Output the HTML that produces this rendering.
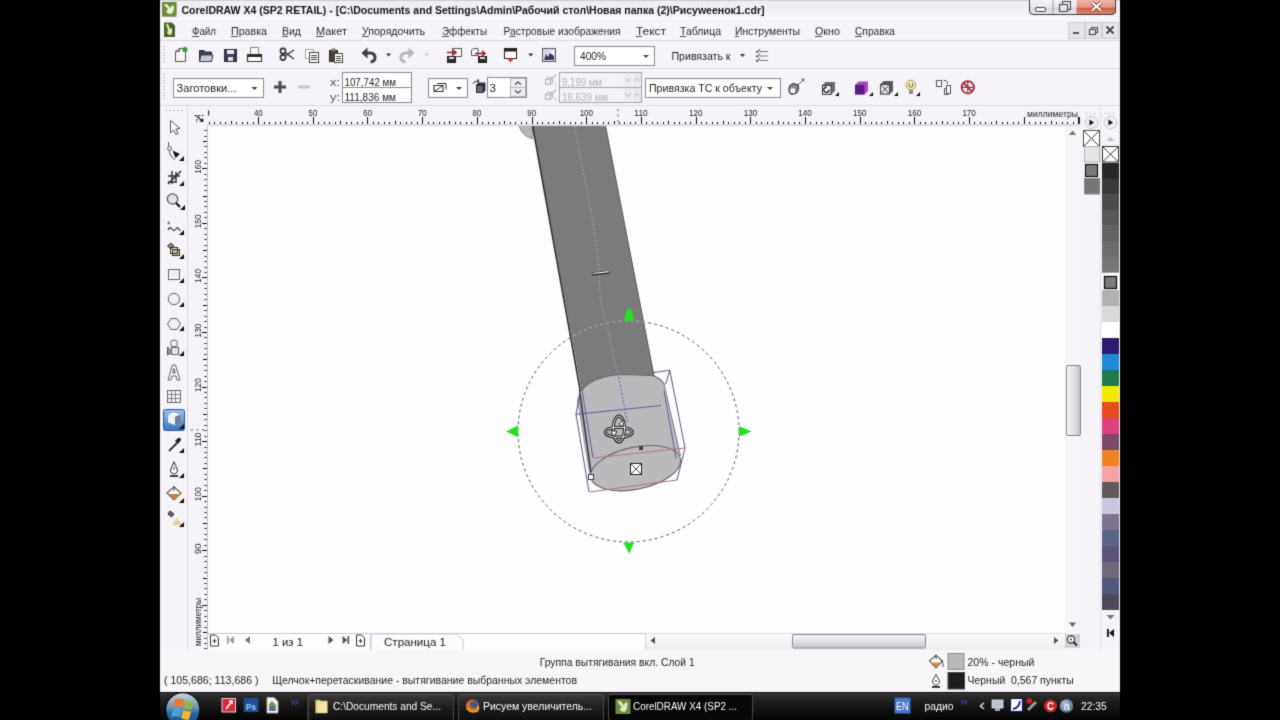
<!DOCTYPE html>
<html><head><meta charset="utf-8">
<style>
*{margin:0;padding:0}
html,body{width:1280px;height:720px;overflow:hidden;background:#000}
svg{position:absolute;left:0;top:0;font-family:"Liberation Sans",sans-serif}
</style></head><body>
<svg width="1280" height="720" viewBox="0 0 1280 720">
<defs>
<linearGradient id="gTitle" x1="0" y1="0" x2="0" y2="1"><stop offset="0" stop-color="#efedf3"/><stop offset="0.6" stop-color="#f3f1f6"/><stop offset="1" stop-color="#f9f7fb"/></linearGradient>
</defs>
<filter id="soft" x="0" y="0" width="1280" height="720" filterUnits="userSpaceOnUse" color-interpolation-filters="sRGB"><feConvolveMatrix order="3" kernelMatrix="0.019 0.100 0.019 0.100 0.524 0.100 0.019 0.100 0.019" edgeMode="duplicate"/></filter>
<g filter="url(#soft)">
<rect x="160" y="0" width="960" height="690" fill="#f6f3f9" />
<rect x="160" y="650" width="960" height="42" fill="#f9f6fa" />
<rect x="160" y="0" width="960" height="20" fill="url(#gTitle)" />
<rect x="160" y="0" width="960" height="1" fill="#cfcdd4" />
<text x="181.5" y="14" font-size="11" fill="#141414" font-weight="bold" textLength="583" lengthAdjust="spacingAndGlyphs" >CorelDRAW X4 (SP2 RETAIL) - [C:\Documents and Settings\Admin\Рабочий стол\Новая папка (2)\Рисуweeнок1.cdr]</text>
<rect x="160" y="40" width="960" height="1" fill="#dddae3" />
<rect x="160" y="68" width="960" height="1" fill="#dddae3" />
<rect x="160" y="105" width="960" height="1" fill="#dddae3" />
<text x="192" y="35" font-size="11.5" fill="#2a2a2a" textLength="24" lengthAdjust="spacingAndGlyphs" >Файл</text>
<rect x="192" y="36" width="7" height="1" fill="#555" />
<text x="231" y="35" font-size="11.5" fill="#2a2a2a" textLength="36" lengthAdjust="spacingAndGlyphs" >Правка</text>
<rect x="231" y="36" width="7" height="1" fill="#555" />
<text x="282" y="35" font-size="11.5" fill="#2a2a2a" textLength="19" lengthAdjust="spacingAndGlyphs" >Вид</text>
<rect x="282" y="36" width="6" height="1" fill="#555" />
<text x="316" y="35" font-size="11.5" fill="#2a2a2a" textLength="31" lengthAdjust="spacingAndGlyphs" >Макет</text>
<rect x="316" y="36" width="8" height="1" fill="#555" />
<text x="362" y="35" font-size="11.5" fill="#2a2a2a" textLength="63" lengthAdjust="spacingAndGlyphs" >Упорядочить</text>
<rect x="362" y="36" width="7" height="1" fill="#555" />
<text x="442" y="35" font-size="11.5" fill="#2a2a2a" textLength="45" lengthAdjust="spacingAndGlyphs" >Эффекты</text>
<rect x="442" y="36" width="7" height="1" fill="#555" />
<text x="503.5" y="35" font-size="11.5" fill="#2a2a2a" textLength="117" lengthAdjust="spacingAndGlyphs" >Растровые изображения</text>
<rect x="509.5" y="36" width="6" height="1" fill="#555" />
<text x="636" y="35" font-size="11.5" fill="#2a2a2a" textLength="30" lengthAdjust="spacingAndGlyphs" >Текст</text>
<rect x="636" y="36" width="6" height="1" fill="#555" />
<text x="680" y="35" font-size="11.5" fill="#2a2a2a" textLength="41" lengthAdjust="spacingAndGlyphs" >Таблица</text>
<rect x="680" y="36" width="6" height="1" fill="#555" />
<text x="735" y="35" font-size="11.5" fill="#2a2a2a" textLength="65" lengthAdjust="spacingAndGlyphs" >Инструменты</text>
<rect x="735" y="36" width="4" height="1" fill="#555" />
<text x="815" y="35" font-size="11.5" fill="#2a2a2a" textLength="25" lengthAdjust="spacingAndGlyphs" >Окно</text>
<rect x="815" y="36" width="7" height="1" fill="#555" />
<text x="855" y="35" font-size="11.5" fill="#2a2a2a" textLength="40" lengthAdjust="spacingAndGlyphs" >Справка</text>
<rect x="855" y="36" width="7" height="1" fill="#555" />
<rect x="208" y="125" width="857" height="507" fill="#fdfcfe" />
<defs>
<linearGradient id="gBtn" x1="0" y1="0" x2="0" y2="1"><stop offset="0" stop-color="#f4f4f6"/><stop offset="0.5" stop-color="#e6e6ea"/><stop offset="0.55" stop-color="#d6d6dc"/><stop offset="1" stop-color="#e8e8ee"/></linearGradient>
<linearGradient id="gClose" x1="0" y1="0" x2="0" y2="1"><stop offset="0" stop-color="#eeb4a6"/><stop offset="0.5" stop-color="#e59684"/><stop offset="0.55" stop-color="#c9604a"/><stop offset="1" stop-color="#dc8a70"/></linearGradient>
</defs>
<path d="M1029.5,0 V11 Q1029.5,14.5 1033,14.5 H1112 Q1115.5,14.5 1115.5,11 V0 Z" fill="url(#gBtn)" stroke="none" stroke-width="1" />
<path d="M1076.5,0 V14.5 H1112 Q1115.5,14.5 1115.5,11 V0 Z" fill="url(#gClose)" stroke="none" stroke-width="1" />
<path d="M1029.5,0 V11 Q1029.5,14.5 1033,14.5 H1112 Q1115.5,14.5 1115.5,11 V0" fill="none" stroke="#3c3c44" stroke-width="1" />
<line x1="1053" y1="0" x2="1053" y2="14" stroke="#9a9aa2" stroke-width="1" />
<rect x="1035.5" y="7.5" width="10" height="4" fill="#fff" stroke="#444" stroke-width="1" rx="1.5"/>
<rect x="1062.5" y="1.5" width="8" height="8" fill="none" stroke="#555" stroke-width="1.2"/>
<rect x="1059.5" y="4.5" width="8" height="7" fill="#e8e8ec" stroke="#555" stroke-width="1.2"/>
<path d="M1092,2.5 L1101,10.5 M1101,2.5 L1092,10.5" fill="none" stroke="#5a2a20" stroke-width="3.6" />
<path d="M1092,2.5 L1101,10.5 M1101,2.5 L1092,10.5" fill="none" stroke="#fff" stroke-width="2.2" />
<rect x="162" y="2" width="14.6" height="14.7" fill="#6f8a3c" />
<path d="M164,5 Q166,3 168,5 L170,8 Q171,6 173,5 L174,7 Q174,12 171,14 Q168,14 166,12 L168,9 Z" fill="#e6f2cc" stroke="none" stroke-width="1" />
<path d="M164,22.5 H172 L175,25.5 V37 H164 Z" fill="#4e6230" stroke="none" stroke-width="1" />
<path d="M166,24 Q168,23 169,26 L170,29 L172,28 Q173,32 171,35 Q168,35 167,33 L168,30 Z" fill="#dcecc0" stroke="none" stroke-width="1" />
<rect x="1068.5" y="22.5" width="16" height="16" fill="#e6e4ea" stroke="#cfcdd5" stroke-width="1"/>
<rect x="1085.5" y="22.5" width="16" height="16" fill="#e6e4ea" stroke="#cfcdd5" stroke-width="1"/>
<rect x="1102.5" y="22.5" width="16" height="16" fill="#e6e4ea" stroke="#cfcdd5" stroke-width="1"/>
<rect x="1073" y="32" width="6" height="2" fill="#555" />
<rect x="1091.5" y="27.5" width="6" height="5" fill="none" stroke="#555" stroke-width="1.2"/>
<rect x="1089.5" y="29.5" width="6" height="5" fill="#e6e4ea" stroke="#555" stroke-width="1.2"/>
<path d="M1106.5,26.5 L1113.5,33.5 M1113.5,26.5 L1106.5,33.5" fill="none" stroke="#444" stroke-width="1.8" />
<rect x="163" y="46" width="2" height="1" fill="#c4c2cc" />
<rect x="163" y="49" width="2" height="1" fill="#c4c2cc" />
<rect x="163" y="52" width="2" height="1" fill="#c4c2cc" />
<rect x="163" y="55" width="2" height="1" fill="#c4c2cc" />
<rect x="163" y="58" width="2" height="1" fill="#c4c2cc" />
<rect x="163" y="61" width="2" height="1" fill="#c4c2cc" />
<path d="M175.5,51.5 L179.5,48.5 H185.5 V61.5 H175.5 Z" fill="#f6f6f8" stroke="#555" stroke-width="1" />
<path d="M175.5,51.5 H179.5 V48.5" fill="none" stroke="#555" stroke-width="1" />
<circle cx="185" cy="49.5" r="2.6" fill="#3a9a3a"/>
<path d="M199.5,50.5 H204 L205.5,52 H211.5 V61.5 H199.5 Z" fill="#3c3e58" stroke="#2a2c40" stroke-width="1" />
<path d="M201,55 H213 L211.5,61.5 H199.5 Z" fill="#c8c8d8" stroke="#3c3e58" stroke-width="1" />
<rect x="224.5" y="49.5" width="12" height="12" fill="#3a3c56" stroke="#2a2c40"/>
<rect x="227" y="50" width="7" height="4" fill="#e8e8f0" />
<rect x="228" y="57" width="5" height="4" fill="#e0e0ea" />
<rect x="250.5" y="47.5" width="8" height="7" fill="#fafafa" stroke="#888"/>
<path d="M247.5,54.5 H261.5 V61.5 H247.5 Z" fill="#fff" stroke="#333" stroke-width="1.2" />
<rect x="248" y="54" width="13" height="3" fill="#2a2a2a" />
<circle cx="283" cy="57.5" r="2.6" fill="none" stroke="#333" stroke-width="1.6"/><circle cx="283" cy="51" r="2.6" fill="none" stroke="#333" stroke-width="1.6"/>
<path d="M285,56 L294,50 M285,52.5 L294,59" fill="none" stroke="#333" stroke-width="1.5" />
<rect x="305.5" y="49.5" width="8" height="9" fill="#f8f8fa" stroke="#aaa"/>
<rect x="309.5" y="52.5" width="9" height="10" fill="#fff" stroke="#444"/>
<path d="M311,55.5 H317 M311,57.5 H317 M311,59.5 H317" fill="none" stroke="#444" stroke-width="1" />
<rect x="329.5" y="50.5" width="8" height="11" fill="#4a4238" stroke="#2e2a24"/>
<rect x="331.5" y="48.5" width="4" height="3" fill="#777" />
<rect x="334.5" y="53.5" width="8" height="9" fill="#fff" stroke="#444"/>
<path d="M336,56.5 H341 M336,58.5 H341 M336,60.5 H341" fill="none" stroke="#444" stroke-width="1" />
<path d="M361.5,53 L367.5,47.5 V58.5 Z" fill="#3d3d44" stroke="none" stroke-width="1" />
<path d="M366,53 H370 Q375,53 375,57.5 Q375,61.5 370.5,62" fill="none" stroke="#3d3d44" stroke-width="3" />
<path d="M386.0,53.5 L391.0,53.5 L388.5,56.5 Z" fill="#333" stroke="none" stroke-width="1" />
<path d="M414.5,53 L408.5,47.5 V58.5 Z" fill="#b8b8bc" stroke="none" stroke-width="1" />
<path d="M410,53 H406 Q401,53 401,57.5 Q401,61.5 405.5,62" fill="none" stroke="#b8b8bc" stroke-width="3" />
<path d="M424.5,53.5 L428.5,53.5 L426.5,56.5 Z" fill="#c8c8cc" stroke="none" stroke-width="1" />
<rect x="452.5" y="48.5" width="9" height="8" fill="#fff" stroke="#555"/>
<path d="M447,52.5 H456 M453,50 L456,52.5 L453,55" fill="none" stroke="#a01818" stroke-width="1.6" />
<rect x="447.5" y="56.5" width="8" height="6" fill="#2a2a30" stroke="#222"/>
<rect x="449" y="57" width="5" height="2" fill="#ddd" />
<path d="M471.5,50 L474,48.5 H478 V55.5 H471.5 Z" fill="#fff" stroke="#555" stroke-width="1" />
<path d="M475,53.5 H485 M482,51 L485,53.5 L482,56" fill="none" stroke="#a01818" stroke-width="1.6" />
<rect x="478.5" y="56.5" width="8" height="6" fill="#2a2a30" stroke="#222"/>
<rect x="480" y="57" width="5" height="2" fill="#ddd" />
<rect x="504.5" y="48.5" width="12" height="10" fill="#fff" stroke="#222"/>
<rect x="505" y="49" width="11" height="2.5" fill="#222" />
<path d="M507,58.5 L510.5,62.5 L514,58.5 Z" fill="#d84020" stroke="none" stroke-width="1" />
<path d="M528.3,53.5 L533.3,53.5 L530.8,56.5 Z" fill="#333" stroke="none" stroke-width="1" />
<rect x="542.5" y="48.5" width="13" height="13" fill="#d8d8e2" stroke="#5a5a6a"/>
<path d="M544,60 L546,54 L548,57 L550,53 L554,56 V60 Z" fill="#3a3a58" stroke="none" stroke-width="1" />
<rect x="551" y="51" width="3" height="3" fill="#fff" />
<rect x="574.5" y="46.5" width="80" height="19" fill="#fff" stroke="#8a8892"/>
<text x="580" y="60" font-size="11.5" fill="#1e1e1e" textLength="26" lengthAdjust="spacingAndGlyphs" >400%</text>
<path d="M643,55.0 L649,55.0 L646,58.0 Z" fill="#444" stroke="none" stroke-width="1" />
<text x="671.5" y="60" font-size="11.5" fill="#1e1e1e" textLength="59" lengthAdjust="spacingAndGlyphs" >Привязать к</text>
<path d="M740.0,54.0 L745.0,54.0 L742.5,57.0 Z" fill="#333" stroke="none" stroke-width="1" />
<path d="M756,51 L757.5,52.5 L760,49 M756,55.5 L757.5,57 L760,53.5 M756,60 L757.5,61.5 L760,58" fill="none" stroke="#555" stroke-width="1.1" />
<path d="M760,51.5 H768 M760,56 H768 M760,60.5 H768" fill="none" stroke="#777" stroke-width="1" />
<rect x="163" y="74" width="2" height="1" fill="#c4c2cc" />
<rect x="163" y="77" width="2" height="1" fill="#c4c2cc" />
<rect x="163" y="80" width="2" height="1" fill="#c4c2cc" />
<rect x="163" y="83" width="2" height="1" fill="#c4c2cc" />
<rect x="163" y="86" width="2" height="1" fill="#c4c2cc" />
<rect x="163" y="89" width="2" height="1" fill="#c4c2cc" />
<rect x="163" y="92" width="2" height="1" fill="#c4c2cc" />
<rect x="163" y="95" width="2" height="1" fill="#c4c2cc" />
<rect x="163" y="98" width="2" height="1" fill="#c4c2cc" />
<rect x="173.5" y="78.5" width="90" height="19" fill="#fff" stroke="#8a8892"/>
<text x="176.5" y="92" font-size="11.5" fill="#1e1e1e" textLength="60" lengthAdjust="spacingAndGlyphs" >Заготовки...</text>
<path d="M251.5,87.0 L257.5,87.0 L254.5,90.0 Z" fill="#444" stroke="none" stroke-width="1" />
<rect x="278.5" y="81" width="3" height="12" fill="#4a4a50" />
<rect x="274" y="85.5" width="12" height="3" fill="#4a4a50" />
<rect x="298" y="85.5" width="12" height="3" fill="#c8c6ce" />
<text x="330" y="86" font-size="11.5" fill="#555" textLength="10" lengthAdjust="spacingAndGlyphs" >x:</text>
<text x="330" y="101" font-size="11.5" fill="#555" textLength="10" lengthAdjust="spacingAndGlyphs" >y:</text>
<rect x="342.5" y="72.5" width="69" height="30" fill="#fff" stroke="#8a8892"/>
<line x1="342.5" y1="87.5" x2="411.5" y2="87.5" stroke="#8a8892" stroke-width="1" />
<text x="344.5" y="85.5" font-size="11.5" fill="#1e1e1e" textLength="51.5" lengthAdjust="spacingAndGlyphs" >107,742 мм</text>
<text x="344.5" y="101" font-size="11.5" fill="#1e1e1e" textLength="51.5" lengthAdjust="spacingAndGlyphs" >111,836 мм</text>
<rect x="428.5" y="78.5" width="39" height="19" fill="#fff" stroke="#8a8892"/>
<path d="M434,85.5 H443 V91.5 H434 Z" fill="#fff" stroke="#333" stroke-width="1.1" />
<path d="M437,83.5 H446 V89.5 M434,91.5 L443,85.5" fill="none" stroke="#333" stroke-width="1" />
<path d="M456,87.0 L462,87.0 L459,90.0 Z" fill="#444" stroke="none" stroke-width="1" />
<path d="M476,85 L478.5,82.5 H485.5 V90.5 L483,93 H476 Z" fill="#2e2e34" stroke="none" stroke-width="1" />
<rect x="477" y="86" width="5.5" height="6" fill="#6a6a72" />
<path d="M473,83.5 Q475,80.5 479,81 M479,81 L477.5,79.5 M479,81 L477.5,82.5" fill="none" stroke="#333" stroke-width="1.1" />
<rect x="487.5" y="77.5" width="39" height="20" fill="#fff" stroke="#8a8892"/>
<text x="489.5" y="92" font-size="11.5" fill="#1e1e1e" textLength="6.5" lengthAdjust="spacingAndGlyphs" >3</text>
<rect x="510.5" y="78.5" width="15" height="18" fill="#eeedf2" stroke="#b8b6be"/>
<line x1="510.5" y1="87.5" x2="525.5" y2="87.5" stroke="#b8b6be" stroke-width="1" />
<path d="M515,84.5 L518,82 L521,84.5 M515,90.5 L518,93 L521,90.5" fill="none" stroke="#444" stroke-width="1.1" />
<path d="M545.5,79.5 L547.5,77.5 H552.5 V82.5 L550.5,84.5 H545.5 Z" fill="#ecebf0" stroke="#b4b2ba" stroke-width="1" />
<path d="M545.5,79.5 H550.5 V84.5" fill="none" stroke="#b4b2ba" stroke-width="1" />
<path d="M550,81 L556,74.5" fill="none" stroke="#c4c2ca" stroke-width="1.6" />
<path d="M554,83 L557,86" fill="none" stroke="#c4c2ca" stroke-width="0.9" />
<path d="M545.5,94.5 L547.5,92.5 H552.5 V97.5 L550.5,99.5 H545.5 Z" fill="#ecebf0" stroke="#b4b2ba" stroke-width="1" />
<path d="M545.5,94.5 H550.5 V99.5" fill="none" stroke="#b4b2ba" stroke-width="1" />
<path d="M550,96 L556,89.5" fill="none" stroke="#c4c2ca" stroke-width="1.6" />
<path d="M554,98 L557,101" fill="none" stroke="#c4c2ca" stroke-width="0.9" />
<rect x="559.5" y="72.5" width="82" height="30" fill="#f4f3f7" stroke="#a6a4ac"/>
<line x1="559.5" y1="87.5" x2="641.5" y2="87.5" stroke="#a6a4ac" stroke-width="1" />
<text x="562" y="86" font-size="11.5" fill="#b4b2ba" textLength="40" lengthAdjust="spacingAndGlyphs" >9,199 мм</text>
<text x="562" y="101" font-size="11.5" fill="#b4b2ba" textLength="46" lengthAdjust="spacingAndGlyphs" >16,639 мм</text>
<rect x="624" y="73" width="8" height="14" fill="#ebeaef" />
<rect x="633" y="73" width="8" height="14" fill="#ebeaef" />
<path d="M625.5,78 L628,82 L630.5,78 M634.5,82 L637,78 L639.5,82" fill="none" stroke="#c4c2ca" stroke-width="1" />
<rect x="624" y="88" width="8" height="14" fill="#ebeaef" />
<rect x="633" y="88" width="8" height="14" fill="#ebeaef" />
<path d="M625.5,93 L628,97 L630.5,93 M634.5,97 L637,93 L639.5,97" fill="none" stroke="#c4c2ca" stroke-width="1" />
<rect x="645.5" y="78.5" width="135" height="19" fill="#fff" stroke="#8a8892"/>
<text x="649" y="92" font-size="11.5" fill="#1e1e1e" textLength="113" lengthAdjust="spacingAndGlyphs" >Привязка ТС к объекту</text>
<path d="M767,87.0 L773,87.0 L770,90.0 Z" fill="#444" stroke="none" stroke-width="1" />
<path d="M789,88.5 Q789.5,84.5 793.5,83.5 L798,85 Q799.5,89.5 796.5,93 L791.5,94.3 Q788.5,92.5 789,88.5 Z" fill="#8a8a90" stroke="#333" stroke-width="1.1" />
<rect x="790.5" y="88.5" width="4.5" height="4.5" fill="#fff" />
<path d="M797,86 L803,80 M801.5,78.5 L804.5,81.5 M804.5,78.5 L801.5,81.5" fill="none" stroke="#555" stroke-width="1" />
<path d="M822,85.5 L825.5,82 H835 V91 L831,94.5 H822 Z" fill="#6a6a70" stroke="none" stroke-width="1" />
<rect x="822.5" y="85.5" width="8.5" height="8.8" fill="#fafafa" stroke="#333"/>
<path d="M829,89.5 A2.6,2.6 0 1 1 826,87.2" fill="none" stroke="#222" stroke-width="1.2" />
<path d="M825,85.8 L827,87.6 L824.8,88.8 Z" fill="#222" stroke="none" stroke-width="1" />
<path d="M835,96 L839,92 V96 Z" fill="#111" stroke="none" stroke-width="1" />
<path d="M855,85 L858.5,81.5 H868 V91 L864.5,94.5 H855 Z" fill="#a448c4" stroke="none" stroke-width="1" />
<rect x="855" y="85" width="9.3" height="9.5" fill="#5a1a80" />
<path d="M869,96 L873,92 V96 Z" fill="#111" stroke="none" stroke-width="1" />
<path d="M880,84.5 L883.5,81 H893 V91 L889.5,94.5 H880 Z" fill="#5a5a60" stroke="none" stroke-width="1" />
<rect x="880.5" y="84.5" width="9" height="9.5" fill="#e6e6ea" stroke="#444"/>
<path d="M881.5,85.5 L888.5,93 M888.5,85.5 L881.5,93" fill="none" stroke="#444" stroke-width="1" />
<path d="M894,96 L898,92 V96 Z" fill="#111" stroke="none" stroke-width="1" />
<circle cx="910.9" cy="85" r="4.8" fill="#f2eab8" stroke="#a89850" stroke-width="1"/>
<path d="M909.2,83 V86.5 Q910.9,88 912.6,86.5 V83" fill="none" stroke="#6a5a20" stroke-width="0.9" />
<rect x="909" y="90" width="4" height="4" fill="#8a8a90" />
<path d="M916,96 L920,92 V96 Z" fill="#111" stroke="none" stroke-width="1" />
<rect x="936.5" y="80.5" width="5" height="6" fill="#fafafa" stroke="#555"/>
<path d="M943.5,80.5 H946 L947.5,82.5 V84" fill="none" stroke="#555" stroke-width="1" />
<rect x="946.5" y="85.5" width="4" height="8" fill="#fafafa" stroke="#555"/>
<path d="M946.5,88.5 H944.5 V94.5 H948.5 V93.5" fill="none" stroke="#555" stroke-width="1" />
<circle cx="967.8" cy="87.3" r="6.2" fill="#f4f0f2" stroke="#a82838" stroke-width="1.7"/>
<path d="M962,87.3 H973.5 M967.8,81.5 V93" fill="none" stroke="#333" stroke-width="1" />
<path d="M963.5,83 L972.2,91.8" fill="none" stroke="#c8203a" stroke-width="1.8" />
<line x1="187.5" y1="106" x2="187.5" y2="650" stroke="#dcd9e2" stroke-width="1" />
<rect x="165" y="110" width="2" height="1" fill="#b8b6c0" />
<rect x="169" y="110" width="2" height="1" fill="#b8b6c0" />
<rect x="173" y="110" width="2" height="1" fill="#b8b6c0" />
<rect x="177" y="110" width="2" height="1" fill="#b8b6c0" />
<rect x="181" y="110" width="2" height="1" fill="#b8b6c0" />
<path d="M170.5,120.5 V133 L173.5,130 L176,134.5 L178,133.5 L175.8,129 L180,128.5 Z" fill="#fff" stroke="#555" stroke-width="1" />
<path d="M168.5,142 V146 M169,151 Q169.5,156 175,160" fill="none" stroke="#555" stroke-width="1" />
<circle cx="169.6" cy="148.5" r="1.9" fill="#fff" stroke="#444" stroke-width="1"/>
<path d="M172.5,150.5 L180,154 L175.5,158 Z" fill="#111" stroke="none" stroke-width="1" />
<path d="M179,161 L184,156 V161 Z" fill="#111" stroke="none" stroke-width="1" />
<path d="M168,176 H180 M172,171 V184 M176,172 V182 H168 M168,184 L181,171" fill="none" stroke="#333" stroke-width="1.5" />
<path d="M179,186 L184,181 V186 Z" fill="#111" stroke="none" stroke-width="1" />
<circle cx="172.5" cy="199" r="5.2" fill="#e2e2e6" stroke="#555" stroke-width="1.2"/>
<path d="M176,203 L180,207" fill="none" stroke="#111" stroke-width="2.2" />
<path d="M180,210 L185,205 V210 Z" fill="#111" stroke="none" stroke-width="1" />
<path d="M167.5,223 L170,223 M168.8,221.5 V224.5" fill="none" stroke="#555" stroke-width="1" />
<path d="M168,230 Q170,226 172,229 T176,229 T180,231" fill="none" stroke="#333" stroke-width="1.3" />
<path d="M179,235 L184,230 V235 Z" fill="#111" stroke="none" stroke-width="1" />
<path d="M167.5,246 L171,243 L174,246 L171,249 Z" fill="#888" stroke="#333" stroke-width="1" />
<rect x="172.5" y="249.5" width="7" height="6" fill="#c8b890" stroke="#333"/>
<rect x="170.5" y="247.5" width="7" height="6" fill="none" stroke="#333"/>
<path d="M179,259 L184,254 V259 Z" fill="#111" stroke="none" stroke-width="1" />
<rect x="168.5" y="269.5" width="11" height="10" fill="#f0f0f2" stroke="#666"/>
<path d="M179,283 L184,278 V283 Z" fill="#111" stroke="none" stroke-width="1" />
<circle cx="174" cy="299" r="5.7" fill="#f0f0f2" stroke="#666" stroke-width="1"/>
<path d="M179,307 L184,302 V307 Z" fill="#111" stroke="none" stroke-width="1" />
<path d="M171,318.5 H177 L180.5,324 L177,329.5 H171 L167.5,324 Z" fill="#f0f0f2" stroke="#666" stroke-width="1" />
<path d="M179,331 L184,326 V331 Z" fill="#111" stroke="none" stroke-width="1" />
<circle cx="174" cy="343.5" r="3.5" fill="#f0f0f2" stroke="#666" stroke-width="1"/>
<path d="M167.5,347 L172.5,352 L167.5,355 Z" fill="#999" stroke="#555" stroke-width="1" />
<rect x="171.5" y="347.5" width="7" height="7" fill="#e8e8ea" stroke="#666"/>
<path d="M179,356 L184,351 V356 Z" fill="#111" stroke="none" stroke-width="1" />
<path d="M168,380 L172.5,365 H175.5 L180,380 H177 L176,376 H172 L171,380 Z M172.8,373 H175.2 L174,368.5 Z" fill="#f4f4f6" stroke="#666" stroke-width="1" />
<rect x="167.5" y="390.5" width="13" height="12" fill="#f4f4f6" stroke="#666"/>
<path d="M167.5,394.5 H180.5 M167.5,398.5 H180.5 M171.5,390.5 V402.5 M175.5,390.5 V402.5" fill="none" stroke="#888" stroke-width="1" />
<defs><linearGradient id="gSel" x1="0" y1="0" x2="0" y2="1"><stop offset="0" stop-color="#9cc0ea"/><stop offset="0.5" stop-color="#6a9ad6"/><stop offset="1" stop-color="#3c72c0"/></linearGradient></defs>
<rect x="163.5" y="409.5" width="21" height="21" fill="url(#gSel)" stroke="#2c5a9a" rx="2"/>
<path d="M168,415 L173,412.5 L180,414.5 L175,417 Z" fill="#fff" stroke="none" stroke-width="1" />
<path d="M168,415 L175,417 V425 L168,422.5 Z" fill="#f0f0f4" stroke="none" stroke-width="1" />
<path d="M175,417 L180,414.5 V422.5 L175,425 Z" fill="#7a7a88" stroke="none" stroke-width="1" />
<path d="M179,429 L184,424 V429 Z" fill="#111" stroke="none" stroke-width="1" />
<path d="M169,451 L177,443" fill="none" stroke="#333" stroke-width="2" />
<path d="M175,441 L178,438 Q181,437 181,440 L178,444 Z" fill="#222" stroke="none" stroke-width="1" />
<path d="M179,453 L184,448 V453 Z" fill="#111" stroke="none" stroke-width="1" />
<path d="M174,462 L170.5,470 Q170.5,473 174,474 Q177.5,473 177.5,470 Z" fill="#fff" stroke="#444" stroke-width="1.1" />
<path d="M174,467 V470" fill="none" stroke="#444" stroke-width="1" />
<rect x="170" y="475" width="8" height="2" fill="#444" />
<path d="M179,478 L184,473 V478 Z" fill="#111" stroke="none" stroke-width="1" />
<path d="M167,493 L174,487 L181,493 L174,500 Z" fill="#fff" stroke="#555" stroke-width="1.1" />
<path d="M168,494 L181,494 L174,500 Z" fill="#c08040" stroke="none" stroke-width="1" />
<path d="M174,486 V491" fill="none" stroke="#444" stroke-width="1" />
<path d="M179,503 L184,498 V503 Z" fill="#111" stroke="none" stroke-width="1" />
<path d="M170,511 L174,514 L171.5,517 L168,514 Z" fill="#666" stroke="#333" stroke-width="1" />
<path d="M172,525 L177,518 L182,525 Z" fill="#e8d090" stroke="none" stroke-width="1" />
<path d="M179,527 L184,522 V527 Z" fill="#111" stroke="none" stroke-width="1" />
<path d="M209.5,122 V124 M214.5,122 V124 M220.5,122 V124 M225.5,122 V124 M231.5,121 V124 M236.5,122 V124 M242.5,122 V124 M247.5,122 V124 M253.5,122 V124 M258.5,117 V124 M264.5,122 V124 M269.5,122 V124 M275.5,122 V124 M280.5,122 V124 M285.5,121 V124 M291.5,122 V124 M296.5,122 V124 M302.5,122 V124 M307.5,122 V124 M313.5,117 V124 M318.5,122 V124 M324.5,122 V124 M329.5,122 V124 M335.5,122 V124 M340.5,121 V124 M346.5,122 V124 M351.5,122 V124 M357.5,122 V124 M362.5,122 V124 M367.5,117 V124 M373.5,122 V124 M378.5,122 V124 M384.5,122 V124 M389.5,122 V124 M395.5,121 V124 M400.5,122 V124 M406.5,122 V124 M411.5,122 V124 M417.5,122 V124 M422.5,117 V124 M428.5,122 V124 M433.5,122 V124 M439.5,122 V124 M444.5,122 V124 M449.5,121 V124 M455.5,122 V124 M460.5,122 V124 M466.5,122 V124 M471.5,122 V124 M477.5,117 V124 M482.5,122 V124 M488.5,122 V124 M493.5,122 V124 M499.5,122 V124 M504.5,121 V124 M510.5,122 V124 M515.5,122 V124 M521.5,122 V124 M526.5,122 V124 M532.5,117 V124 M537.5,122 V124 M542.5,122 V124 M548.5,122 V124 M553.5,122 V124 M559.5,121 V124 M564.5,122 V124 M570.5,122 V124 M575.5,122 V124 M581.5,122 V124 M586.5,117 V124 M592.5,122 V124 M597.5,122 V124 M603.5,122 V124 M608.5,122 V124 M614.5,121 V124 M619.5,122 V124 M624.5,122 V124 M630.5,122 V124 M635.5,122 V124 M641.5,117 V124 M646.5,122 V124 M652.5,122 V124 M657.5,122 V124 M663.5,122 V124 M668.5,121 V124 M674.5,122 V124 M679.5,122 V124 M685.5,122 V124 M690.5,122 V124 M696.5,117 V124 M701.5,122 V124 M706.5,122 V124 M712.5,122 V124 M717.5,122 V124 M723.5,121 V124 M728.5,122 V124 M734.5,122 V124 M739.5,122 V124 M745.5,122 V124 M750.5,117 V124 M756.5,122 V124 M761.5,122 V124 M767.5,122 V124 M772.5,122 V124 M778.5,121 V124 M783.5,122 V124 M788.5,122 V124 M794.5,122 V124 M799.5,122 V124 M805.5,117 V124 M810.5,122 V124 M816.5,122 V124 M821.5,122 V124 M827.5,122 V124 M832.5,121 V124 M838.5,122 V124 M843.5,122 V124 M849.5,122 V124 M854.5,122 V124 M860.5,117 V124 M865.5,122 V124 M871.5,122 V124 M876.5,122 V124 M881.5,122 V124 M887.5,121 V124 M892.5,122 V124 M898.5,122 V124 M903.5,122 V124 M909.5,122 V124 M914.5,117 V124 M920.5,122 V124 M925.5,122 V124 M931.5,122 V124 M936.5,122 V124 M942.5,121 V124 M947.5,122 V124 M953.5,122 V124 M958.5,122 V124 M963.5,122 V124 M969.5,117 V124 M974.5,122 V124 M980.5,122 V124 M985.5,122 V124 M991.5,122 V124 M996.5,121 V124 M1002.5,122 V124 M1007.5,122 V124 M1013.5,122 V124 M1018.5,122 V124 M1024.5,117 V124 M1029.5,122 V124 M1035.5,122 V124 M1040.5,122 V124 M1045.5,122 V124 M1051.5,121 V124 M1056.5,122 V124 M1062.5,122 V124 M1067.5,122 V124 M1073.5,122 V124 M1078.5,117 V124" fill="none" stroke="#111" stroke-width="1" />
<text x="258.3" y="115.8" font-size="9" fill="#222" textLength="8.8" lengthAdjust="spacingAndGlyphs" text-anchor="middle" >40</text>
<text x="312.98" y="115.8" font-size="9" fill="#222" textLength="8.8" lengthAdjust="spacingAndGlyphs" text-anchor="middle" >50</text>
<text x="367.66" y="115.8" font-size="9" fill="#222" textLength="8.8" lengthAdjust="spacingAndGlyphs" text-anchor="middle" >60</text>
<text x="422.34" y="115.8" font-size="9" fill="#222" textLength="8.8" lengthAdjust="spacingAndGlyphs" text-anchor="middle" >70</text>
<text x="477.02000000000004" y="115.8" font-size="9" fill="#222" textLength="8.8" lengthAdjust="spacingAndGlyphs" text-anchor="middle" >80</text>
<text x="531.7" y="115.8" font-size="9" fill="#222" textLength="8.8" lengthAdjust="spacingAndGlyphs" text-anchor="middle" >90</text>
<text x="586.3800000000001" y="115.8" font-size="9" fill="#222" textLength="13.5" lengthAdjust="spacingAndGlyphs" text-anchor="middle" >100</text>
<text x="641.0600000000001" y="115.8" font-size="9" fill="#222" textLength="13.5" lengthAdjust="spacingAndGlyphs" text-anchor="middle" >110</text>
<text x="695.74" y="115.8" font-size="9" fill="#222" textLength="13.5" lengthAdjust="spacingAndGlyphs" text-anchor="middle" >120</text>
<text x="750.4200000000001" y="115.8" font-size="9" fill="#222" textLength="13.5" lengthAdjust="spacingAndGlyphs" text-anchor="middle" >130</text>
<text x="805.1" y="115.8" font-size="9" fill="#222" textLength="13.5" lengthAdjust="spacingAndGlyphs" text-anchor="middle" >140</text>
<text x="859.7800000000001" y="115.8" font-size="9" fill="#222" textLength="13.5" lengthAdjust="spacingAndGlyphs" text-anchor="middle" >150</text>
<text x="914.46" y="115.8" font-size="9" fill="#222" textLength="13.5" lengthAdjust="spacingAndGlyphs" text-anchor="middle" >160</text>
<text x="969.1400000000001" y="115.8" font-size="9" fill="#222" textLength="13.5" lengthAdjust="spacingAndGlyphs" text-anchor="middle" >170</text>
<rect x="208" y="110.5" width="1.2" height="5" fill="#333" />
<text x="1027" y="116.5" font-size="9" fill="#222" textLength="51" lengthAdjust="spacingAndGlyphs" >миллиметры</text>
<path d="M618,109 V123" fill="none" stroke="#777" stroke-width="1.2" stroke-dasharray="2,3.5"/>
<path d="M204.5,648.5 H206.5 M204.5,643.5 H206.5 M204.5,638.5 H206.5 M203,632.5 H207 M204.5,627.5 H206.5 M204.5,621.5 H206.5 M204.5,616.5 H206.5 M204.5,610.5 H206.5 M202,605.5 H207 M204.5,599.5 H206.5 M204.5,594.5 H206.5 M204.5,588.5 H206.5 M204.5,583.5 H206.5 M203,578.5 H207 M204.5,572.5 H206.5 M204.5,567.5 H206.5 M204.5,561.5 H206.5 M204.5,556.5 H206.5 M202,550.5 H207 M204.5,545.5 H206.5 M204.5,539.5 H206.5 M204.5,534.5 H206.5 M204.5,528.5 H206.5 M203,523.5 H207 M204.5,517.5 H206.5 M204.5,512.5 H206.5 M204.5,507.5 H206.5 M204.5,501.5 H206.5 M202,496.5 H207 M204.5,490.5 H206.5 M204.5,485.5 H206.5 M204.5,479.5 H206.5 M204.5,474.5 H206.5 M203,468.5 H207 M204.5,463.5 H206.5 M204.5,457.5 H206.5 M204.5,452.5 H206.5 M204.5,447.5 H206.5 M202,441.5 H207 M204.5,436.5 H206.5 M204.5,430.5 H206.5 M204.5,425.5 H206.5 M204.5,419.5 H206.5 M203,414.5 H207 M204.5,408.5 H206.5 M204.5,403.5 H206.5 M204.5,397.5 H206.5 M204.5,392.5 H206.5 M202,387.5 H207 M204.5,381.5 H206.5 M204.5,376.5 H206.5 M204.5,370.5 H206.5 M204.5,365.5 H206.5 M203,359.5 H207 M204.5,354.5 H206.5 M204.5,348.5 H206.5 M204.5,343.5 H206.5 M204.5,337.5 H206.5 M202,332.5 H207 M204.5,327.5 H206.5 M204.5,321.5 H206.5 M204.5,316.5 H206.5 M204.5,310.5 H206.5 M203,305.5 H207 M204.5,299.5 H206.5 M204.5,294.5 H206.5 M204.5,288.5 H206.5 M204.5,283.5 H206.5 M202,277.5 H207 M204.5,272.5 H206.5 M204.5,267.5 H206.5 M204.5,261.5 H206.5 M204.5,256.5 H206.5 M203,250.5 H207 M204.5,245.5 H206.5 M204.5,239.5 H206.5 M204.5,234.5 H206.5 M204.5,228.5 H206.5 M202,223.5 H207 M204.5,217.5 H206.5 M204.5,212.5 H206.5 M204.5,206.5 H206.5 M204.5,201.5 H206.5 M203,196.5 H207 M204.5,190.5 H206.5 M204.5,185.5 H206.5 M204.5,179.5 H206.5 M204.5,174.5 H206.5 M202,168.5 H207 M204.5,163.5 H206.5 M204.5,157.5 H206.5 M204.5,152.5 H206.5 M204.5,146.5 H206.5 M203,141.5 H207 M204.5,136.5 H206.5 M204.5,130.5 H206.5" fill="none" stroke="#111" stroke-width="1" />
<text x="0" y="0" font-size="9" fill="#222" text-anchor="middle" textLength="10.5" lengthAdjust="spacingAndGlyphs" transform="translate(201,548.72) rotate(-90)">90</text>
<text x="0" y="0" font-size="9" fill="#222" text-anchor="middle" textLength="14" lengthAdjust="spacingAndGlyphs" transform="translate(201,494.16) rotate(-90)">100</text>
<text x="0" y="0" font-size="9" fill="#222" text-anchor="middle" textLength="14" lengthAdjust="spacingAndGlyphs" transform="translate(201,439.60) rotate(-90)">110</text>
<text x="0" y="0" font-size="9" fill="#222" text-anchor="middle" textLength="14" lengthAdjust="spacingAndGlyphs" transform="translate(201,385.04) rotate(-90)">120</text>
<text x="0" y="0" font-size="9" fill="#222" text-anchor="middle" textLength="14" lengthAdjust="spacingAndGlyphs" transform="translate(201,330.48) rotate(-90)">130</text>
<text x="0" y="0" font-size="9" fill="#222" text-anchor="middle" textLength="14" lengthAdjust="spacingAndGlyphs" transform="translate(201,275.92) rotate(-90)">140</text>
<text x="0" y="0" font-size="9" fill="#222" text-anchor="middle" textLength="14" lengthAdjust="spacingAndGlyphs" transform="translate(201,221.36) rotate(-90)">150</text>
<text x="0" y="0" font-size="9" fill="#222" text-anchor="middle" textLength="14" lengthAdjust="spacingAndGlyphs" transform="translate(201,166.80) rotate(-90)">160</text>
<text x="0" y="0" font-size="9" fill="#222" textLength="48" lengthAdjust="spacingAndGlyphs" transform="translate(201,646) rotate(-90)">миллиметры</text>
<path d="M191,429.8 H206" fill="none" stroke="#777" stroke-width="1.2" stroke-dasharray="2,3.5"/>
<path d="M194.5,115.5 H204 M196.8,115.5 V123" fill="none" stroke="#333" stroke-width="1.2" stroke-dasharray="2,1.5"/>
<path d="M197.5,116.5 L201,120" fill="none" stroke="#222" stroke-width="1.2" />
<path d="M203.5,122 L199.5,121.5 L203,118 Z" fill="#111" stroke="none" stroke-width="1" />
<line x1="207.5" y1="125" x2="1080" y2="125" stroke="#bdbbc4" stroke-width="1" />
<line x1="207.5" y1="125" x2="207.5" y2="650" stroke="#bdbbc4" stroke-width="1" />
<rect x="208" y="126" width="857" height="507" fill="#fdfcfe" />
<defs><clipPath id="cv"><rect x="208" y="126" width="857" height="506"/></clipPath></defs>
<g clip-path="url(#cv)">
<path d="M518,120 Q519,136 533,139 L532,120 Z" fill="#b4b4b6" stroke="#888" stroke-width="0.8" />
<path d="M531.2,118 L604,118 L654.5,377 L581.5,391 Z" fill="#7b7b7d" stroke="none" stroke-width="1" />
<path d="M531.2,118 L580.3,391" fill="none" stroke="#2e2e30" stroke-width="1.6" />
<path d="M604,118 L654,376" fill="none" stroke="#5a5a5c" stroke-width="1" />
<path d="M574.5,126 L581,160 L590,205 L597.5,250 L600.5,300 L608,330 L614,360 L619,378" fill="none" stroke="#a4a4a6" stroke-width="1" stroke-dasharray="2,2"/>
<path d="M592.5,274 L609.5,272" fill="none" stroke="#222" stroke-width="3" />
<path d="M593,273.5 L609,271.6" fill="none" stroke="#fff" stroke-width="1.2" />
<path d="M581.5,391 C586,382 604,375 622,374.5 L652,375.5 Q661,378 664,384 L680.5,455 L591,474 L578,402 Z" fill="#b9b9bb" stroke="none" stroke-width="1" />
<path d="M577,400 L580,391 L591,473 L589,474 Z" fill="#a4a4a6" stroke="none" stroke-width="1" />
<path d="M579.5,390 L591,473" fill="none" stroke="#2e2e30" stroke-width="1.4" />
<ellipse cx="635.6" cy="468.2" rx="45.8" ry="21" transform="rotate(-12 635.6 468.2)" fill="#bababc" stroke="#6e6466" stroke-width="1.1"/>
<path d="M581.5,391 C586,382 604,375 622,374.5 L652,375.5 Q661,378 664,384" fill="none" stroke="#6a6a6c" stroke-width="1.2" />
<path d="M664,384 L680.5,456" fill="none" stroke="#7a7a7c" stroke-width="1" />
<path d="M575.6,414.4 L661,405.5 M664,391 L676,458 M582.2,391 L593,458" fill="none" stroke="#5c5ca0" stroke-width="1" />
<path d="M618.7,377 L627.2,422" fill="none" stroke="#5c5ca0" stroke-width="1" stroke-dasharray="2,2"/>
<path d="M652.5,372.7 L669.8,370.3 L685,448 M669.8,370.3 L665.6,384.4 M580,392 L576,414 L589,492 M677,480 L685,448" fill="none" stroke="#5a5870" stroke-width="1" />
<path d="M593,458 L685,448" fill="none" stroke="#b07888" stroke-width="1" />
<path d="M589,492 L677,480" fill="none" stroke="#a07080" stroke-width="1" />
<g fill="none" stroke="#111" stroke-width="3"><ellipse cx="618.9" cy="432.2" rx="13.5" ry="5"/><ellipse cx="618.9" cy="428.9" rx="5.6" ry="13"/></g>
<g fill="none" stroke="#fff" stroke-width="1"><ellipse cx="618.9" cy="432.2" rx="13.5" ry="5"/><ellipse cx="618.9" cy="428.9" rx="5.6" ry="13"/></g>
<path d="M611,431 L614,437 L617,431 Z" fill="#fff" stroke="#111" stroke-width="0.8" />
<path d="M619,424 L623,420 L623,427 Z" fill="#fff" stroke="#111" stroke-width="0.8" />
<rect x="630.5" y="463.5" width="11" height="11" fill="#fff" stroke="#222" stroke-width="1"/>
<path d="M631,464 L641,474 M641,464 L631,474" fill="none" stroke="#444" stroke-width="1" />
<rect x="639" y="446" width="4" height="4" fill="#444" />
<rect x="588.5" y="474.5" width="5" height="5" fill="#fff" stroke="#335" stroke-width="1"/>
<circle cx="628.5" cy="431.5" r="110.5" fill="none" stroke="#5a5a5a" stroke-width="1" stroke-dasharray="3,3"/>
<defs><clipPath id="tubeclip"><path d="M531.2,118 L604,118 L654.5,377 L581.5,391 Z"/></clipPath></defs>
<circle cx="628.5" cy="431.5" r="110.5" fill="none" stroke="#a8a8aa" stroke-width="1.4" stroke-dasharray="3,3" clip-path="url(#tubeclip)"/>
<path d="M506,431.4 L518,425.5 L518,437 Z" fill="#20e020" stroke="none" stroke-width="1" />
<path d="M751.7,431.5 L739.2,426.2 V436.8 Z" fill="#20e020" stroke="none" stroke-width="1" />
<path d="M623.3,542.5 H634.2 L629.2,553.8 Z" fill="#20e020" stroke="none" stroke-width="1" />
<path d="M623.8,320.8 H634.2 L631.2,308.8 H627 Z" fill="#20e020" stroke="none" stroke-width="1" />
</g>
<rect x="1065" y="126" width="15" height="507" fill="#f6f5f9" />
<path d="M1069,135 L1072.5,130.5 L1076,135 Z" fill="#777" stroke="none" stroke-width="1" />
<defs><linearGradient id="gThumbV" x1="0" y1="0" x2="1" y2="0"><stop offset="0" stop-color="#f4f4f6"/><stop offset="0.5" stop-color="#e2e2e6"/><stop offset="1" stop-color="#bcbcc2"/></linearGradient><linearGradient id="gThumbH" x1="0" y1="0" x2="0" y2="1"><stop offset="0" stop-color="#f4f4f6"/><stop offset="0.5" stop-color="#e2e2e6"/><stop offset="1" stop-color="#c4c4ca"/></linearGradient></defs>
<rect x="1066.5" y="365.5" width="14" height="70" fill="url(#gThumbV)" stroke="#8a8a90" rx="1.5"/>
<path d="M1069,622.5 L1076,622.5 L1072.5,627 Z" fill="#666" stroke="none" stroke-width="1" />
<rect x="1065" y="634" width="15" height="14" fill="#cfcfd4" />
<circle cx="1071" cy="639.5" r="3.6" fill="#f4f4f6" stroke="#333" stroke-width="1.1"/>
<path d="M1073.5,642 L1077,645.5" fill="none" stroke="#222" stroke-width="1.8" />
<circle cx="1071" cy="639.5" r="1" fill="#333"/>
<rect x="208" y="633" width="437" height="17" fill="#fdfcfe" />
<defs><linearGradient id="gTrack" x1="0" y1="0" x2="0" y2="1"><stop offset="0" stop-color="#fbfafc"/><stop offset="1" stop-color="#eeedf1"/></linearGradient></defs>
<rect x="645" y="633" width="420" height="17" fill="url(#gTrack)" />
<line x1="208" y1="633.5" x2="645" y2="633.5" stroke="#c8c6ce" stroke-width="1" />
<line x1="645" y1="633.5" x2="1065" y2="633.5" stroke="#dcdae2" stroke-width="1" />
<line x1="645.5" y1="633" x2="645.5" y2="650" stroke="#d8d6de" stroke-width="1" />
<path d="M655,637 L650.5,640.5 L655,644 Z" fill="#555" stroke="none" stroke-width="1" />
<path d="M1054,637 L1058.5,640.5 L1054,644 Z" fill="#555" stroke="none" stroke-width="1" />
<rect x="792.5" y="634.5" width="133" height="13.5" fill="url(#gThumbH)" stroke="#8a8a90" rx="1.5"/>
<path d="M210.5,635.0 H215.5 L218.5,638.0 V646.0 H210.5 Z" fill="#fff" stroke="#333" stroke-width="1" />
<path d="M212.5,641.0 H216.5 M214.5,639.0 V643.0" fill="none" stroke="#333" stroke-width="1" />
<rect x="227" y="636" width="1.6" height="8" fill="#9a9aa0" />
<path d="M234,636 L229,640 L234,644 Z" fill="#9a9aa0" stroke="none" stroke-width="1" />
<path d="M250,636 L245,640 L250,644 Z" fill="#7a7a80" stroke="none" stroke-width="1" />
<text x="272.5" y="646" font-size="11.5" fill="#222" textLength="30.5" lengthAdjust="spacingAndGlyphs" >1 из 1</text>
<path d="M328.5,636 L333.5,640 L328.5,644 Z" fill="#555" stroke="none" stroke-width="1" />
<path d="M342.5,636 L347.5,640 L342.5,644 Z" fill="#555" stroke="none" stroke-width="1" />
<rect x="347.5" y="636" width="1.6" height="8" fill="#555" />
<path d="M356.5,635.0 H361.5 L364.5,638.0 V646.0 H356.5 Z" fill="#fff" stroke="#333" stroke-width="1" />
<path d="M358.5,641.0 H362.5 M360.5,639.0 V643.0" fill="none" stroke="#333" stroke-width="1" />
<line x1="370.5" y1="633" x2="370.5" y2="650" stroke="#c8c6ce" stroke-width="1" />
<path d="M371,650 V634 H457 L463,640 V650" fill="#fcfbfe" stroke="#d0ced6" stroke-width="1" />
<text x="384" y="646" font-size="11.5" fill="#222" textLength="62" lengthAdjust="spacingAndGlyphs" >Страница 1</text>
<line x1="1100.5" y1="106" x2="1100.5" y2="650" stroke="#e2e0e8" stroke-width="1" />
<rect x="1079" y="117" width="1" height="7" fill="#333" />
<rect x="1086" y="113" width="1" height="1" fill="#aaa" />
<rect x="1090" y="113" width="1" height="1" fill="#aaa" />
<rect x="1094" y="113" width="1" height="1" fill="#aaa" />
<circle cx="1091.5" cy="122.5" r="6.3" fill="#f0f0f2" stroke="#c8c8cc" stroke-width="1"/>
<path d="M1089.5,119.5 L1094,122.5 L1089.5,125.5 Z" fill="#111" stroke="none" stroke-width="1" />
<rect x="1105" y="113" width="1" height="1" fill="#aaa" />
<rect x="1109" y="113" width="1" height="1" fill="#aaa" />
<rect x="1113" y="113" width="1" height="1" fill="#aaa" />
<circle cx="1110.5" cy="122.5" r="6.3" fill="#f0f0f2" stroke="#c8c8cc" stroke-width="1"/>
<path d="M1108.5,119.5 L1113,122.5 L1108.5,125.5 Z" fill="#111" stroke="none" stroke-width="1" />
<rect x="1083.5" y="130.5" width="16" height="16" fill="#fff" stroke="#555"/>
<path d="M1084,131 L1099,146 M1099,131 L1084,146" fill="none" stroke="#333" stroke-width="1" />
<rect x="1084.5" y="146.5" width="15" height="15.5" fill="#e6e6e8" stroke="#b4b4b8"/>
<rect x="1085.5" y="164.5" width="12" height="12" fill="#7a7a7c" stroke="#111" stroke-width="1.2"/>
<rect x="1084.5" y="178.5" width="15" height="15.5" fill="#767678" stroke="#8a8a8e"/>
<path d="M1106.5,141 L1110.5,137 L1114.5,141 Z" fill="#c0c0c4" stroke="none" stroke-width="1" />
<rect x="1102.5" y="146.5" width="16" height="15.5" fill="#fff" stroke="#333"/>
<path d="M1103,147 L1118,161.5 M1118,147 L1103,161.5" fill="none" stroke="#333" stroke-width="1" />
<rect x="1102" y="163" width="17" height="16" fill="#262628" />
<rect x="1102" y="178.6" width="17" height="16" fill="#3a3a3c" />
<rect x="1102" y="194.2" width="17" height="16" fill="#4b4b4d" />
<rect x="1102" y="209.8" width="17" height="16" fill="#585858" />
<rect x="1102" y="225.4" width="17" height="16" fill="#626264" />
<rect x="1102" y="241" width="17" height="16" fill="#6c6c6e" />
<rect x="1102" y="256.6" width="17" height="16" fill="#767678" />
<rect x="1102" y="273.5" width="17" height="16.5" fill="#fcfcfd" />
<rect x="1104.5" y="276.5" width="12" height="12" fill="#7a7a7c" stroke="#111" stroke-width="1.3"/>
<rect x="1102" y="290" width="17" height="16" fill="#b1b1b3" />
<rect x="1102" y="306" width="17" height="16" fill="#d9d9db" />
<rect x="1102" y="322" width="17" height="16" fill="#ffffff" />
<rect x="1102" y="338" width="17" height="16" fill="#2e1a70" />
<rect x="1102" y="354" width="17" height="16" fill="#1e8ad8" />
<rect x="1102" y="370" width="17" height="16" fill="#1c7a4c" />
<rect x="1102" y="386" width="17" height="16" fill="#f4e800" />
<rect x="1102" y="402" width="17" height="16" fill="#e84c1e" />
<rect x="1102" y="418" width="17" height="16" fill="#e0407c" />
<rect x="1102" y="434" width="17" height="16" fill="#7a4a68" />
<rect x="1102" y="450" width="17" height="16" fill="#f08222" />
<rect x="1102" y="466" width="17" height="16" fill="#f6a2a2" />
<rect x="1102" y="482" width="17" height="16" fill="#5e5a5c" />
<rect x="1102" y="498" width="17" height="16" fill="#ccc6dc" />
<rect x="1102" y="514" width="17" height="16" fill="#7c7490" />
<rect x="1102" y="530" width="17" height="16" fill="#5a6486" />
<rect x="1102" y="546" width="17" height="16" fill="#5c5478" />
<rect x="1102" y="562" width="17" height="16" fill="#6e6878" />
<rect x="1102" y="578" width="17" height="16" fill="#505878" />
<rect x="1102" y="594" width="17" height="16" fill="#4e4858" />
<path d="M1106.5,615 L1114.5,615 L1110.5,619.5 Z" fill="#777" stroke="none" stroke-width="1" />
<rect x="1107" y="629" width="1.8" height="8" fill="#111" />
<path d="M1114,629 L1109,633 L1114,637 Z" fill="#111" stroke="none" stroke-width="1" />
<text x="539.7" y="666" font-size="11.5" fill="#222" textLength="155" lengthAdjust="spacingAndGlyphs" >Группа вытягивания вкл. Слой 1</text>
<text x="164" y="684" font-size="11.5" fill="#222" textLength="94.5" lengthAdjust="spacingAndGlyphs" >( 105,686; 113,686 )</text>
<text x="272.2" y="684" font-size="11.5" fill="#222" textLength="304.8" lengthAdjust="spacingAndGlyphs" >Щелчок+перетаскивание - вытягивание выбранных элементов</text>
<path d="M929.5,661 L936,655.5 L942.5,661 L936,668 Z" fill="#fff" stroke="#555" stroke-width="1.1" />
<path d="M930.5,662.5 H941.5 L936,667.5 Z" fill="#d88a30" stroke="none" stroke-width="1" />
<path d="M936,654.5 V659 M941,660 Q944,663 943,667" fill="none" stroke="#444" stroke-width="1" />
<rect x="948" y="653.5" width="16" height="16" fill="#b9b9bb" stroke="#8a8a8e"/>
<text x="967.5" y="665.6" font-size="11.5" fill="#222" textLength="67" lengthAdjust="spacingAndGlyphs" >20% - черный</text>
<path d="M936,674.5 L932.5,681 Q932.5,684.5 936,685.5 Q939.5,684.5 939.5,681 Z" fill="#fff" stroke="#444" stroke-width="1" />
<rect x="932" y="686" width="8" height="1.8" fill="#222" />
<circle cx="936" cy="681" r="0.9" fill="#444"/>
<rect x="948" y="672.5" width="16.5" height="16.5" fill="#1d1d1f" stroke="#444"/>
<text x="967.5" y="683.75" font-size="11.5" fill="#222" textLength="106.3" lengthAdjust="spacingAndGlyphs" >Черный  0,567 пункты</text>
<defs><linearGradient id="gTask" x1="0" y1="0" x2="0" y2="1"><stop offset="0" stop-color="#454545"/><stop offset="0.08" stop-color="#2e2e2e"/><stop offset="0.5" stop-color="#151515"/><stop offset="1" stop-color="#050505"/></linearGradient><linearGradient id="gTBtn" x1="0" y1="0" x2="0" y2="1"><stop offset="0" stop-color="#3a3a3a"/><stop offset="0.5" stop-color="#1e1e1e"/><stop offset="1" stop-color="#0c0c0c"/></linearGradient><radialGradient id="gOrb" cx="0.5" cy="0.4" r="0.6"><stop offset="0" stop-color="#3a78a8"/><stop offset="0.7" stop-color="#1e4a74"/><stop offset="1" stop-color="#7fa0b8"/></radialGradient></defs>
<rect x="160" y="690" width="960" height="30" fill="#f5f2f8" />
<rect x="160" y="692" width="960" height="28" fill="url(#gTask)" />
<line x1="160" y1="692.5" x2="1120" y2="692.5" stroke="#0e0e0e" stroke-width="1" />
<defs><linearGradient id="gOrb2" x1="0" y1="0" x2="0" y2="1"><stop offset="0" stop-color="#c8d4e0"/><stop offset="0.45" stop-color="#6a90b0"/><stop offset="0.6" stop-color="#2a66a4"/><stop offset="1" stop-color="#1a4a80"/></linearGradient></defs>
<circle cx="182.8" cy="709.8" r="17.6" fill="#050505"/>
<circle cx="182.8" cy="709.8" r="16.6" fill="url(#gOrb2)"/>
<path d="M175,699 Q180,697.5 184.5,700 L182.5,707.5 Q178,705.5 173.5,707 Z" fill="#e87a30" stroke="none" stroke-width="1" />
<path d="M185.5,700.5 Q190,702.5 193.5,701.5 L191.5,709.5 Q187.5,710.5 183.5,708.5 Z" fill="#8ab848" stroke="none" stroke-width="1" />
<path d="M173,708.5 Q177.5,707 182,709 L180,717 Q176,715.5 171,717 Z" fill="#4aa0e0" stroke="none" stroke-width="1" />
<path d="M183,710 Q187.5,712 191.2,711 L189,719.5 Q185,720.5 181,718 Z" fill="#f0b830" stroke="none" stroke-width="1" />
<rect x="222" y="698.5" width="13.5" height="13.5" fill="#d8283a" stroke="#f0d0d0" stroke-width="1"/>
<path d="M226,709 L232,701 M229,701 H232 V704" fill="none" stroke="#fff" stroke-width="1.6" />
<rect x="243.8" y="698" width="14.7" height="14" fill="#1f4f90" />
<text x="246" y="709.5" font-size="9" fill="#9cd0ff" font-weight="bold" textLength="10" lengthAdjust="spacingAndGlyphs" >Ps</text>
<path d="M267,697.5 H274 L278,701.5 V713 H267 Z" fill="#f4f4f8" stroke="#aaa" stroke-width="1" />
<path d="M269,704 L272,701 L276,705 V711 H269 Z" fill="#6a9a40" stroke="none" stroke-width="1" />
<path d="M269,708 L272,705 L275,708 V711 H269 Z" fill="#7060b0" stroke="none" stroke-width="1" />
<path d="M291,700 L294,702.5 L291,705 M295,700 L298,702.5 L295,705" fill="none" stroke="#3a3a8a" stroke-width="1.6" />
<line x1="307.5" y1="693" x2="307.5" y2="720" stroke="#2e2e2e" stroke-width="1" />
<rect x="308.5" y="694.5" width="145" height="26" fill="url(#gTBtn)" stroke="#4a4a4a" rx="2"/>
<text x="333" y="709.6" font-size="11.5" fill="#fff" textLength="108" lengthAdjust="spacingAndGlyphs" >C:\Documents and Se...</text>
<rect x="458.5" y="694.5" width="145" height="26" fill="url(#gTBtn)" stroke="#4a4a4a" rx="2"/>
<text x="483" y="709.6" font-size="11.5" fill="#fff" textLength="109" lengthAdjust="spacingAndGlyphs" >Рисуем увеличитель...</text>
<rect x="608.5" y="694.5" width="144" height="26" fill="#070707" stroke="#4a4a4a" rx="2"/>
<text x="633" y="709.6" font-size="11.5" fill="#fff" textLength="104" lengthAdjust="spacingAndGlyphs" >CorelDRAW X4 (SP2 ...</text>
<path d="M315.5,700 H320 L321,701 H327.5 V713 H315.5 Z" fill="#e8d890" stroke="#a09040" stroke-width="0.8" />
<rect x="318" y="701.5" width="9" height="11.5" fill="#f0e4a8" />
<circle cx="472.5" cy="706" r="6.5" fill="#e06a1a"/><circle cx="474" cy="704.5" r="3.8" fill="#3a5aa0"/>
<path d="M467,708 Q470,713 477,711 Q479,709 478,706" fill="none" stroke="#f0a030" stroke-width="2" />
<rect x="615.5" y="699" width="15" height="15" fill="#6e8a40" />
<path d="M617.5,702 Q619.5,700 621.5,702 L623.5,705 Q624.5,703 626.5,702 L627.5,704 Q627.5,710 624.5,712 Q621.5,712 619.5,710 L621.5,707 Z" fill="#dcecc0" stroke="none" stroke-width="1" />
<rect x="894.8" y="697.8" width="15.5" height="15.5" fill="#4a7ccc" stroke="#2a4a90" stroke-width="0.8"/>
<text x="896" y="709.5" font-size="10" fill="#fff" textLength="12.5" lengthAdjust="spacingAndGlyphs" >EN</text>
<text x="924.5" y="709.7" font-size="11.5" fill="#fff" textLength="29" lengthAdjust="spacingAndGlyphs" >радио</text>
<path d="M961,700 L963.5,702 L961,704 M964.5,700 L967,702 L964.5,704" fill="none" stroke="#3a3a9a" stroke-width="1.4" />
<path d="M984,703 L980.5,706 L984,709" fill="none" stroke="#ddd" stroke-width="1.6" />
<rect x="992" y="700" width="11" height="8" fill="#b8c4d4" stroke="#eee" stroke-width="0.8"/>
<rect x="995" y="708" width="5" height="3" fill="#aaa" />
<rect x="1010.5" y="698.5" width="12" height="13" fill="#fff" stroke="#1a1a6a" stroke-width="1.2"/>
<path d="M1013,709 Q1019,708 1020,701" fill="none" stroke="#1a1a8a" stroke-width="1.8" />
<path d="M1028,710 L1036,702" fill="none" stroke="#999" stroke-width="3" />
<circle cx="1029.5" cy="701" r="2.8" fill="#d02020"/>
<circle cx="1050.5" cy="706" r="6.5" fill="#c82424"/>
<text x="1047" y="710" font-size="10" fill="#fff" font-weight="bold" textLength="7" lengthAdjust="spacingAndGlyphs" >C</text>
<defs><radialGradient id="gA" cx="0.4" cy="0.35" r="0.7"><stop offset="0" stop-color="#b8c8d8"/><stop offset="1" stop-color="#4a6a8a"/></radialGradient></defs>
<circle cx="1066.5" cy="706" r="6.8" fill="url(#gA)"/>
<text x="1063.5" y="710" font-size="10" fill="#fff" textLength="6.5" lengthAdjust="spacingAndGlyphs" >a</text>
<text x="1081" y="709.7" font-size="11.5" fill="#fff" textLength="25.7" lengthAdjust="spacingAndGlyphs" >22:35</text>
</g>
</svg>
</body></html>
